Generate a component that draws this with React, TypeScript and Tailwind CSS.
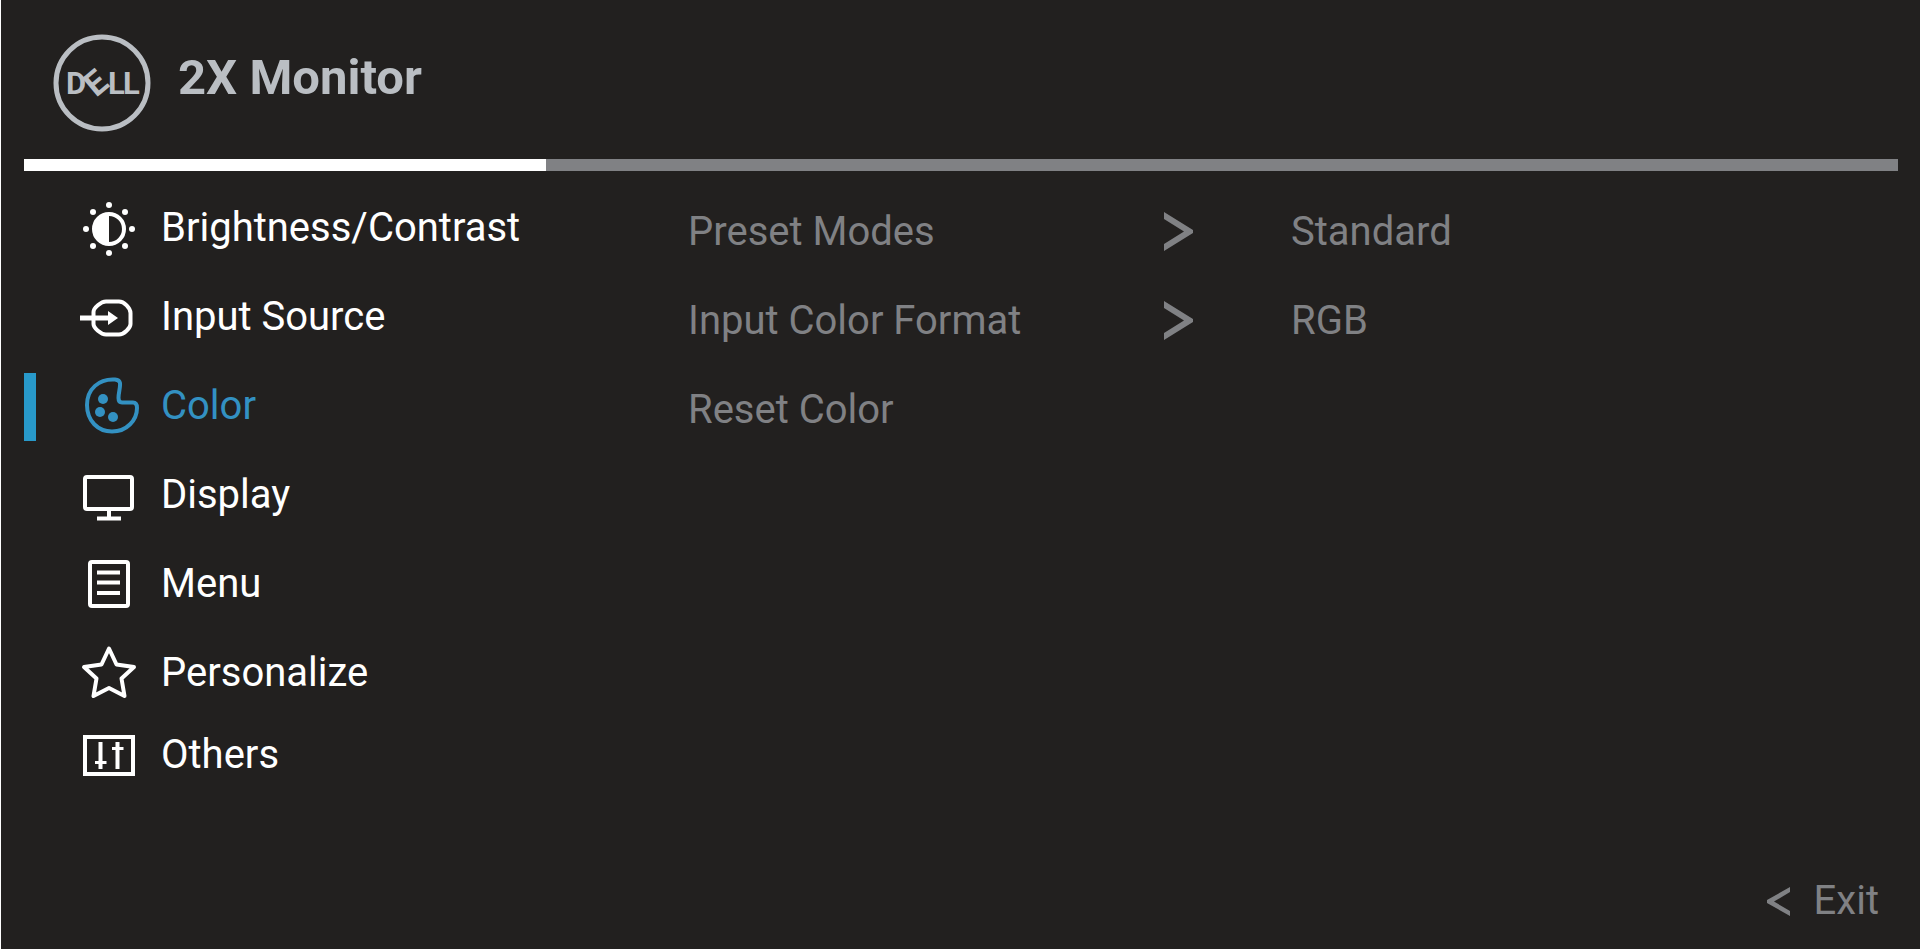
import type { ReactNode } from 'react'
import clsx from 'clsx'

type MenuItem = {
  label: string
  icon: ReactNode
}

const iconClass = 'h-[60px] w-[60px] shrink-0'

function DellLogo() {
  return (
    <svg
      viewBox="0 0 98 98"
      className="h-[98px] w-[98px] shrink-0 font-bold"
      role="img"
      aria-label="Dell"
      fill="currentColor"
    >
      <circle cx="49" cy="49" r="46" fill="none" stroke="currentColor" strokeWidth="5" />
      <text x="13" y="60" fontSize="31">D</text>
      <text x="0" y="0" fontSize="34" transform="translate(43 64) rotate(-40)">E</text>
      <text x="55" y="60" fontSize="31">L</text>
      <text x="70" y="60" fontSize="31">L</text>
    </svg>
  )
}

function BrightnessIcon() {
  return (
    <svg viewBox="0 0 60 60" className={iconClass} fill="currentColor" aria-hidden="true">
      <circle cx="30" cy="30" r="15" fill="none" stroke="currentColor" strokeWidth="4" />
      <path d="M30 14a16 16 0 0 0 0 32z" />
      <circle cx="30" cy="6" r="3" />
      <circle cx="30" cy="54" r="3" />
      <circle cx="7" cy="30" r="3" />
      <circle cx="53" cy="30" r="3" />
      <circle cx="14" cy="13" r="3" />
      <circle cx="46" cy="13" r="3" />
      <circle cx="14" cy="47" r="3" />
      <circle cx="46" cy="47" r="3" />
    </svg>
  )
}

function InputIcon() {
  return (
    <svg viewBox="0 0 60 60" className={iconClass} fill="none" stroke="currentColor" strokeWidth="4" aria-hidden="true">
      <path d="M14.500 30V24C14.500 20 22 13.500 27 13.500H40C45 13.500 51.500 20 51.500 25V36C51.500 40 45 46.500 40 46.500H27C22 46.500 14.500 40 14.500 36Z" />
      <path d="M1 30H31" strokeWidth="5" />
      <path d="M29 23L39 30L29 37Z" fill="currentColor" stroke="none" />
    </svg>
  )
}

function ColorIcon() {
  return (
    <svg viewBox="0 0 60 60" className={iconClass} fill="none" stroke="currentColor" strokeWidth="4" strokeLinejoin="round" aria-hidden="true">
      <path d="M36 2.500C20 1.500 8 12 8 28C8 44 19 54.500 33 54.500C48 54.500 58 43 58 31Q58 25.500 54 25.500H43Q39.500 25.500 39.500 21C39.500 15 41.500 11 41 6Q40.500 3 36 2.500Z" />
      <g fill="currentColor" stroke="none">
        <circle cx="24" cy="22" r="5" />
        <circle cx="21" cy="35" r="5" />
        <circle cx="34" cy="40" r="5" />
      </g>
    </svg>
  )
}

function DisplayIcon() {
  return (
    <svg viewBox="0 0 60 60" className={iconClass} fill="none" stroke="currentColor" strokeWidth="4" aria-hidden="true">
      <rect x="6" y="11" width="47" height="32" rx="2" />
      <path d="M30 43v9M18 52.500h24" />
    </svg>
  )
}

function MenuIcon() {
  return (
    <svg viewBox="0 0 60 60" className={iconClass} fill="none" stroke="currentColor" strokeWidth="4" aria-hidden="true">
      <rect x="11" y="7" width="38" height="44" rx="2" />
      <path d="M18 17.500h23M18 27.500h23M18 38h23" />
    </svg>
  )
}

function StarIcon() {
  return (
    <svg viewBox="0 0 60 60" className={iconClass} fill="none" stroke="currentColor" strokeWidth="4" strokeLinejoin="round" aria-hidden="true">
      <path d="M30 4.500L37.500 20.500L55 23L42.500 34.500L45.500 52L30 44L14.500 52L17.500 34.500L5 23L22.500 20.500Z" />
    </svg>
  )
}

function OthersIcon() {
  return (
    <svg viewBox="0 0 60 60" className={iconClass} fill="none" stroke="currentColor" strokeWidth="4" aria-hidden="true">
      <rect x="6" y="11" width="48" height="37" />
      <path d="M21.500 16v27M38.500 16v27" />
      <path d="M16 36.500h11.500M33 22.500h11.500" strokeWidth="3" />
    </svg>
  )
}

function ChevronRight() {
  return (
    <svg viewBox="0 0 29 39" className="h-[39px] w-[29px]" fill="currentColor" aria-hidden="true">
      <path d="M0 0L29 18V21L0 39V32L20 19.500L0 7Z" />
    </svg>
  )
}

const menu: MenuItem[] = [
  { label: 'Brightness/Contrast', icon: <BrightnessIcon /> },
  { label: 'Input Source', icon: <InputIcon /> },
  { label: 'Color', icon: <ColorIcon /> },
  { label: 'Display', icon: <DisplayIcon /> },
  { label: 'Menu', icon: <MenuIcon /> },
  { label: 'Personalize', icon: <StarIcon /> },
  { label: 'Others', icon: <OthersIcon /> },
]

const settings = [
  { label: 'Preset Modes', value: 'Standard' },
  { label: 'Input Color Format', value: 'RGB' },
  { label: 'Reset Color' },
]

export default function App() {
  const active = 'Color'

  return (
    <div className="flex min-h-screen flex-col border-l border-white bg-[#22201f] pr-[22px] pl-[23px] font-['Roboto',sans-serif] text-[40px] leading-[48px] text-white">
      <header className="flex items-center gap-[27px] pt-[34px] pl-[29px] text-[#babec3]">
        <DellLogo />
        <h1 className="pb-2.5 text-[49px] leading-[56px] font-bold">2X Monitor</h1>
      </header>

      <div className="mt-[27px] h-3 bg-[#808184]">
        <div className="h-3 w-[27.85%] bg-white" />
      </div>

      <main className="grid grid-cols-[664fr_1210fr]">
        {/* Main menu */}
        <nav className="pt-[13px]">
          <ul>
            {menu.map((item) => (
              <li key={item.label} className="group">
                <button
                  type="button"
                  aria-current={item.label === active}
                  className={clsx(
                    'flex h-[89px] w-full items-center text-left group-last:h-[76px]',
                    item.label === active && 'text-[#3391c2]',
                  )}
                >
                  <span className={clsx('h-[68px] w-3', item.label === active && 'bg-[#2899ca]')} />
                  <span className="ml-[43px]">{item.icon}</span>
                  <span className="ml-[22px] pb-0.5">{item.label}</span>
                </button>
              </li>
            ))}
          </ul>
        </nav>

        {/* Settings of the selected menu */}
        <ul className="pt-4 text-[#808184]">
          {settings.map((setting) => (
            <li key={setting.label}>
              <button
                type="button"
                className="grid h-[89px] w-full grid-cols-[476fr_127fr_607fr] items-center text-left"
              >
                <span>{setting.label}</span>
                {setting.value && <ChevronRight />}
                {setting.value && <span>{setting.value}</span>}
              </button>
            </li>
          ))}
        </ul>
      </main>

      <footer className="mt-auto flex justify-end pr-[19px] pb-6 text-[#808184]">
        <button type="button" className="flex items-center gap-6">
          <svg viewBox="0 0 23 29" className="h-[29px] w-[23px]" fill="currentColor" aria-hidden="true">
            <path d="M23 0V5L7 14.500L23 24V29L0 16V13Z" />
          </svg>
          Exit
        </button>
      </footer>
    </div>
  )
}
